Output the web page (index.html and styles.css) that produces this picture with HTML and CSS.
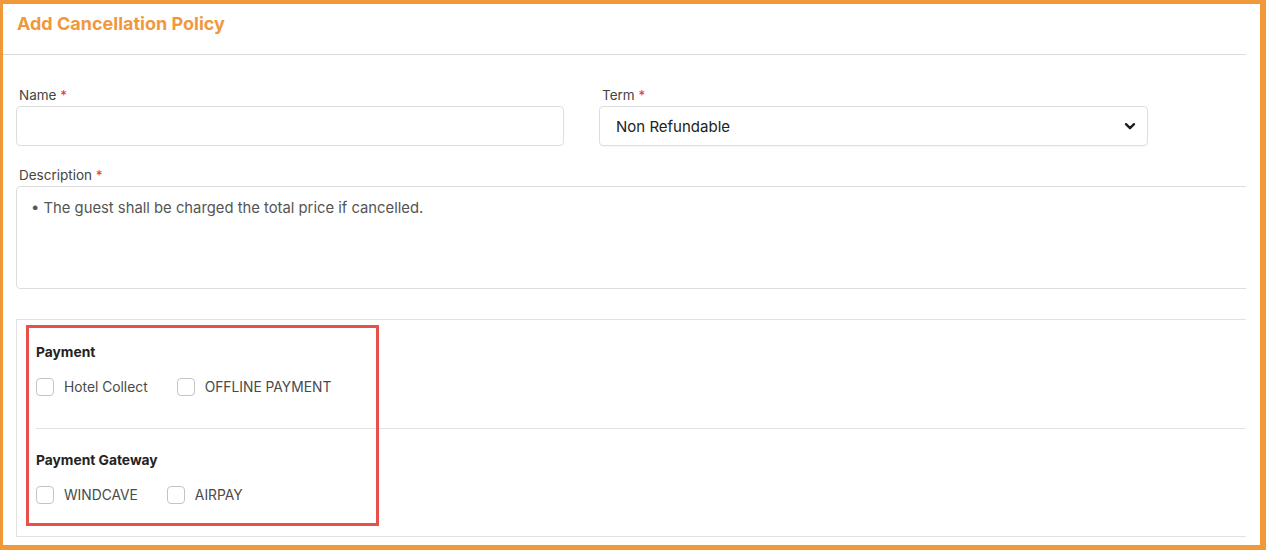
FILE: index.html
```html
<!DOCTYPE html>
<html>

<head>
    <title>Add Cancellation Policy</title>
    <link rel="stylesheet" href="styles.css">
</head>

<body>
    <div class="frame">
        <div class="panel">
            <!--Header-->
            <div class="panel-header">
                <h2 class="panel-title">Add Cancellation Policy</h2>
            </div>

            <!--Form-->
            <div class="form-body">
                <div class="form-row">
                    <div class="field">
                        <label for="name">Name <span class="req">*</span></label>
                        <input type="text" id="name" class="text-input">
                    </div>
                    <div class="field">
                        <label>Term <span class="req">*</span></label>
                        <div class="select-box">
                            <span>Non Refundable</span>
                            <svg width="12" height="9" viewBox="0 0 12 9">
                                <path d="M2 2.2 L6 6.2 L10 2.2" fill="none" stroke="#1f1f1f" stroke-width="2.4" stroke-linecap="round" stroke-linejoin="round"/>
                            </svg>
                        </div>
                    </div>
                </div>

                <div class="field">
                    <label for="desc">Description <span class="req">*</span></label>
                    <textarea id="desc" class="desc-input">• The guest shall be charged the total price if cancelled.</textarea>
                </div>

                <!--Payment options-->
                <div class="pay-section">
                    <div class="pay-group">
                        <div class="pay-title">Payment</div>
                        <div class="check-row">
                            <label class="check"><span class="box"></span>Hotel Collect</label>
                            <label class="check"><span class="box"></span>OFFLINE PAYMENT</label>
                        </div>
                    </div>
                    <div class="pay-group divided">
                        <div class="pay-title">Payment Gateway</div>
                        <div class="check-row">
                            <label class="check"><span class="box"></span>WINDCAVE</label>
                            <label class="check"><span class="box"></span>AIRPAY</label>
                        </div>
                    </div>
                    <div class="highlight"></div>
                </div>
            </div>
        </div>
    </div>
</body>

</html>
```

FILE: styles.css
```css
  body {
      margin: 0;
      background-color: #f0993b;
      font-family: Inter, "Noto Sans", Arial, sans-serif;
  }

  /* white page inside the orange frame */
  .frame {
      margin: 4px 6px 0 3px;
      height: 541px;
      background-color: #fff;
      overflow: hidden;
  }

  .panel {
      width: 1243px;
      height: 541px;
      overflow: hidden;
  }

  /* Header */
  .panel-header {
      height: 50px;
      border-bottom: 1px solid #dadada;
      padding-left: 14px;
  }

  .panel-title {
      margin: 0;
      padding-top: 8px;
      font-size: 18px;
      line-height: 24px;
      font-weight: 700;
      color: #ef983e;
  }

  /* Form */
  .form-body {
      padding: 32px 0 0 13px;
  }

  .form-row {
      display: flex;
      gap: 35px;
      margin-bottom: 21px;
  }

  .form-row .field:first-child {
      width: 548px;
  }

  .form-row .field:last-child {
      width: 549px;
  }

  .field label {
      display: block;
      font-size: 13.5px;
      line-height: 16px;
      color: #444;
      margin-bottom: 3px;
      padding-left: 3px;
  }

  .req {
      color: #e53935;
  }

  .text-input {
      display: block;
      width: 100%;
      height: 40px;
      box-sizing: border-box;
      border: 1px solid #dedede;
      border-radius: 4px;
  }

  .select-box {
      display: flex;
      justify-content: space-between;
      align-items: center;
      height: 40px;
      box-sizing: border-box;
      border: 1px solid #dedede;
      border-radius: 4px;
      box-shadow: 0 1px 1px rgba(0, 0, 0, 0.03);
      padding: 0 11px 0 16px;
      font-size: 15px;
      color: #222;
  }

  .desc-input {
      display: block;
      width: 1260px;
      height: 103px;
      box-sizing: border-box;
      border: 1px solid #dedede;
      border-radius: 4px;
      padding: 12px 14px;
      font-family: Inter, "Noto Sans", Arial, sans-serif;
      font-size: 14.8px;
      line-height: 18px;
      color: #555;
      resize: none;
  }

  /* Payment section */
  .pay-section {
      position: relative;
      margin-top: 30px;
      width: 1260px;
      border: 1px solid #e2e2e2;
      padding-left: 19px;
  }

  .pay-group {
      padding: 24px 0 32px;
  }

  .pay-group.divided {
      border-top: 1px solid #e2e2e2;
      padding-top: 23px;
  }

  .pay-title {
      font-size: 13.8px;
      line-height: 16px;
      font-weight: 700;
      color: #222;
      margin-bottom: 18px;
  }

  .check-row {
      display: flex;
      gap: 29px;
  }

  .check {
      display: flex;
      align-items: center;
      gap: 10px;
      height: 18px;
      font-size: 13.8px;
      color: #4a4a4a;
  }

  .check .box {
      width: 18px;
      height: 18px;
      box-sizing: border-box;
      border: 1.5px solid #c4c4c4;
      border-radius: 4px;
  }

  /* red annotation box */
  .highlight {
      position: absolute;
      left: 9px;
      top: 5px;
      width: 347px;
      height: 195px;
      border: 3px solid #e8504a;
  }
```
